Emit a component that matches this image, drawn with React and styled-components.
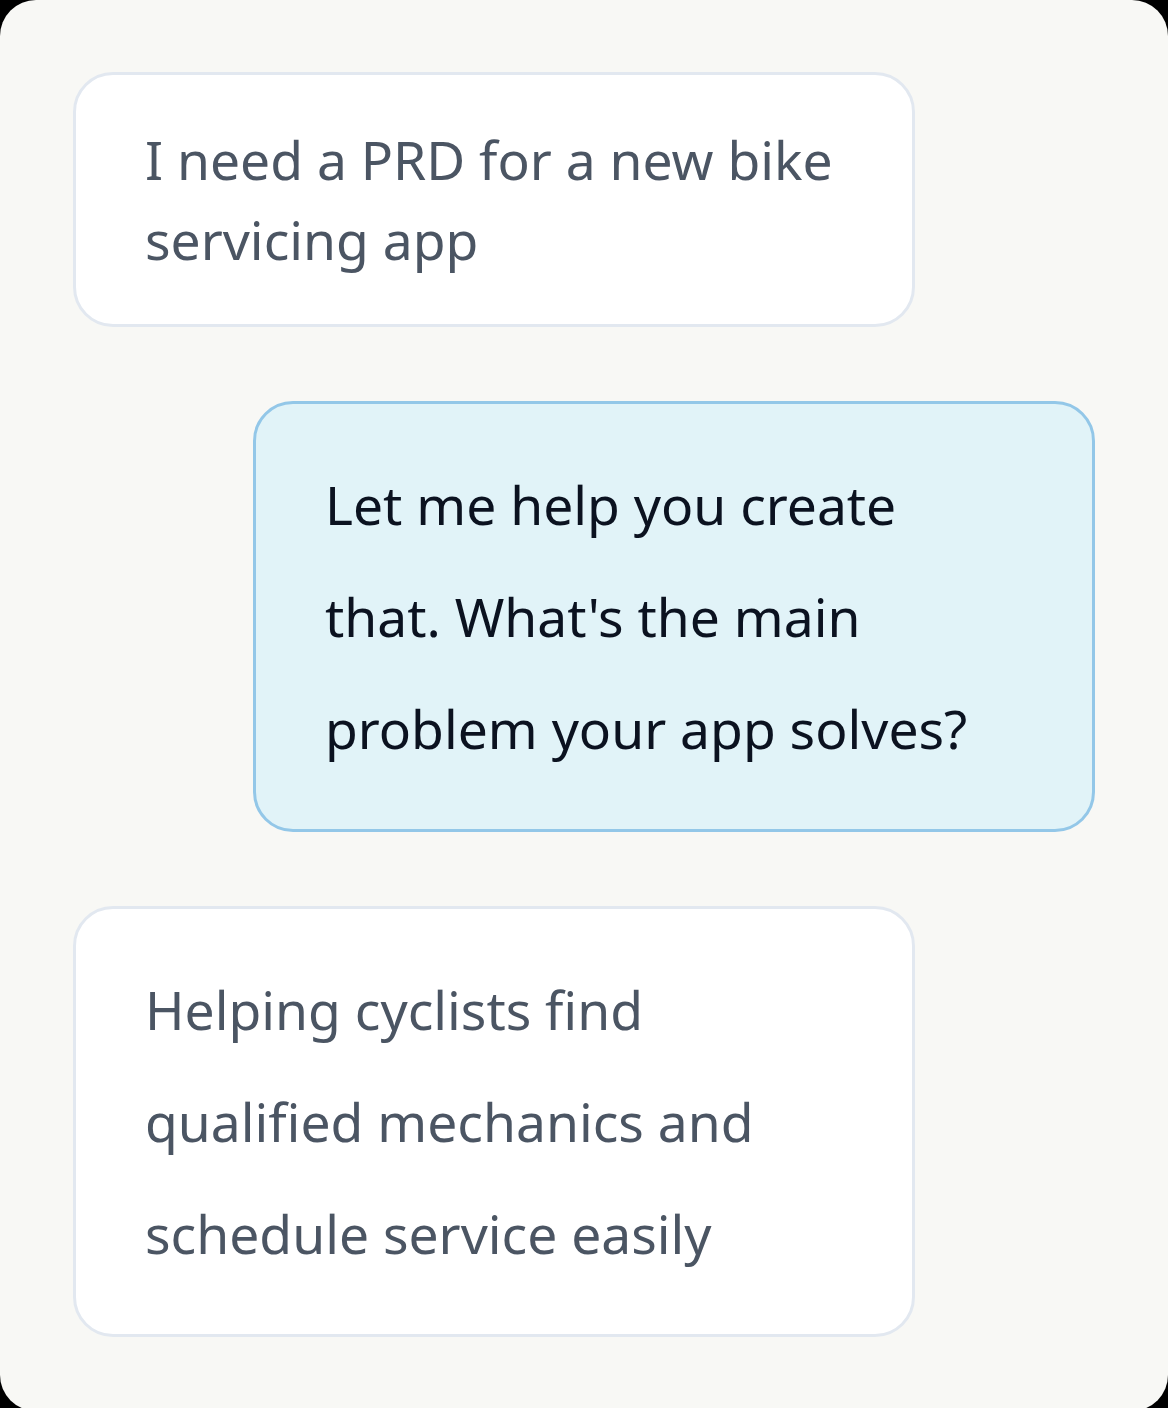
import React from "react";
import styled, { createGlobalStyle } from "styled-components";

const GlobalStyle = createGlobalStyle`
  html, body {
    margin: 0;
    padding: 0;
    background: #000;
  }
  * {
    box-sizing: border-box;
  }
`;

const messages = [
  { from: "user", text: "I need a PRD for a new bike servicing app", tight: true },
  { from: "bot", text: "Let me help you create that. What's the main problem your app solves?" },
  { from: "user", text: "Helping cyclists find qualified mechanics and schedule service easily" },
];

export default function App() {
  return (
    <>
      <GlobalStyle />
      <Frame>
        {messages.map((m, i) => (
          <Bubble key={i} $bot={m.from === "bot"} $tight={m.tight}>
            {m.text}
          </Bubble>
        ))}
      </Frame>
    </>
  );
}

const Frame = styled.div`
  width: 1168px;
  min-height: 1408px;
  background: #f8f8f5;
  border-radius: 36px;
  padding: 72px 73px 74px;
  display: flex;
  flex-direction: column;
  gap: 74px;
  font-family: "Noto Sans", "Open Sans", sans-serif;
`;

const Bubble = styled.div`
  width: 842px;
  align-self: ${(p) => (p.$bot ? "flex-end" : "flex-start")};
  padding: 45px 69px 44px;
  border-radius: 40px;
  border: 3px solid ${(p) => (p.$bot ? "#93c7e8" : "#e2e8f0")};
  background: ${(p) => (p.$bot ? "#e1f3f8" : "#ffffff")};
  color: ${(p) => (p.$bot ? "#0b1220" : "#4b5563")};
  font-size: 53.4px;
  line-height: ${(p) => (p.$tight ? "80px" : "112px")};
`;
